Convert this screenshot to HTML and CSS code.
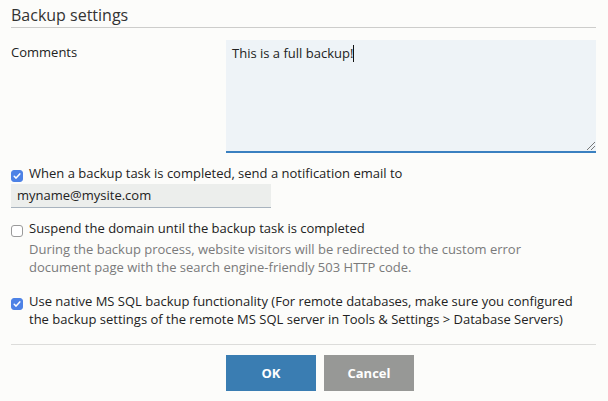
FILE: index.html
```html
<!DOCTYPE html>
<html lang="en">
<head>
<meta charset="utf-8">
<title>Backup settings</title>
<link rel="stylesheet" href="styles.css">
</head>
<body>
<div class="dialog">
  <h2 class="title">Backup settings</h2>

  <div class="form-row">
    <label class="field-label" for="comments">Comments</label>
    <div class="field">
      <div class="textarea" id="comments">This is a full backup!<span class="caret"></span><span class="grip"></span></div>
    </div>
  </div>

  <div class="check-row first">
    <span class="checkbox checked"><svg viewBox="0 0 12 12" width="12" height="12"><path d="M3.2 6.3 L5.1 8.1 L8.8 3.9" fill="none" stroke="#fff" stroke-width="1.5" stroke-linecap="round" stroke-linejoin="round"/></svg></span>
    <span class="check-text">When a backup task is completed, send a notification email to</span>
  </div>
  <div class="email">myname@mysite.com</div>

  <div class="check-row second">
    <span class="checkbox"></span>
    <div class="check-body">
      <span class="check-text">Suspend the domain until the backup task is completed</span>
      <p class="hint">During the backup process, website visitors will be redirected to the custom error<br>document page with the search engine-friendly 503 HTTP code.</p>
    </div>
  </div>

  <div class="check-row third">
    <span class="checkbox checked"><svg viewBox="0 0 12 12" width="12" height="12"><path d="M3.2 6.3 L5.1 8.1 L8.8 3.9" fill="none" stroke="#fff" stroke-width="1.5" stroke-linecap="round" stroke-linejoin="round"/></svg></span>
    <span class="check-text">Use native MS SQL backup functionality (For remote databases, make sure you configured<br>the backup settings of the remote MS SQL server in Tools &amp; Settings &gt; Database Servers)</span>
  </div>

  <div class="buttons">
    <button class="btn btn-ok">OK</button>
    <button class="btn btn-cancel">Cancel</button>
  </div>
</div>
</body>
</html>
```

FILE: styles.css
```css
html, body {
  margin: 0;
  padding: 0;
  background: #fcfcfa;
}

body {
  font-family: "Open Sans", "Noto Sans", sans-serif;
  font-size: 13px;
  line-height: 18px;
  color: #222;
}

.dialog {
  padding: 0 12px 0 11px;
}

.title {
  margin: 4px 0 0;
  font-size: 16px;
  font-weight: 400;
  line-height: 22px;
  color: #333;
  padding-bottom: 1px;
  border-bottom: 1px solid #cdcdcb;
}

.form-row {
  display: flex;
  margin-top: 12px;
}

.field-label {
  width: 215px;
  flex: none;
  padding-top: 3px;
}

.field {
  flex: 1;
}

.textarea {
  position: relative;
  box-sizing: border-box;
  height: 113px;
  background: #eef3f7;
  border-bottom: 2px solid #3a80c0;
  padding: 4px 6px;
  color: #222;
}

.caret {
  display: inline-block;
  width: 1px;
  height: 17px;
  background: #111;
  vertical-align: -4px;
}

.grip {
  position: absolute;
  right: 1px;
  bottom: 1px;
  width: 8px;
  height: 8px;
  background:
    linear-gradient(135deg, transparent 45%, #777 45%, #777 55%, transparent 55%) no-repeat,
    linear-gradient(135deg, transparent 45%, #777 45%, #777 55%, transparent 55%) no-repeat;
  background-size: 8px 8px, 4px 4px;
  background-position: 0 0, 4px 4px;
}

.check-row {
  display: flex;
  align-items: flex-start;
}

.check-row.first { margin-top: 11px; }
.check-row.second { margin-top: 11px; }
.check-row.third { margin-top: 16px; }

.checkbox {
  flex: none;
  box-sizing: border-box;
  width: 12px;
  height: 12px;
  margin-top: 6px;
  margin-right: 6px;
  border: 1px solid #9a9a9a;
  border-radius: 3px;
  background: #fff;
  display: flex;
  align-items: center;
  justify-content: center;
}

.checkbox.checked {
  background: #4d82e6;
  border-color: #4d82e6;
}

.checkbox svg {
  display: block;
  flex: none;
}

.email {
  box-sizing: border-box;
  width: 260px;
  height: 24px;
  margin-top: 2px;
  padding: 0 6px;
  line-height: 23px;
  background: #eceeec;
  border-bottom: 1px solid #a8b3be;
  color: #222;
}

.hint {
  margin: 3px 0 0;
  color: #7a7a7a;
}

.buttons {
  display: flex;
  gap: 8px;
  margin-top: 16px;
  padding-top: 10px;
  padding-left: 215px;
  border-top: 1px solid #dcdcda;
}

.btn {
  width: 90px;
  height: 36px;
  border: 0;
  padding: 0;
  font-family: "Open Sans", "Noto Sans", sans-serif;
  font-size: 13px;
  font-weight: 700;
  color: #fff;
  cursor: pointer;
}

.btn-ok { background: #3a7db2; }
.btn-cancel { background: #979896; }
```
